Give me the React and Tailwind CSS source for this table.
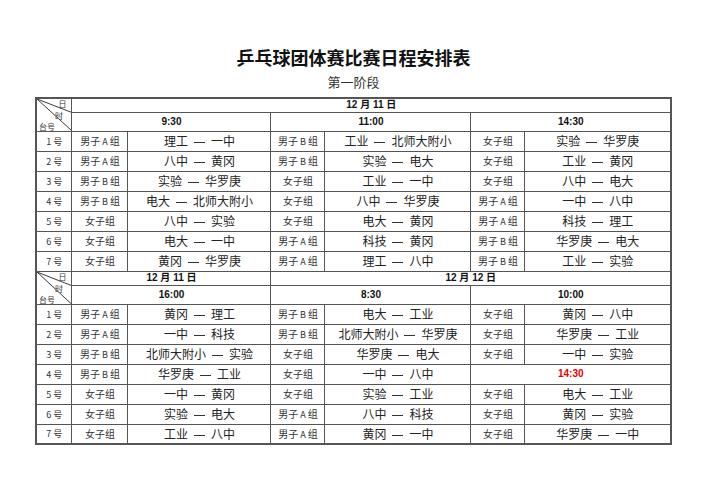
import React from 'react';

const CJK = { fontFamily: '"Noto Sans CJK SC", "Noto Sans", sans-serif' };
const LAT = { fontFamily: '"Liberation Sans", "Noto Sans CJK SC", sans-serif' };

const sections = [
  {
    dates: [{ label: '12 月 11 日', span: 6 }],
    times: ['9:30', '11:00', '14:30'],
    rows: [
      [['男子A组', '理工 — 一中'], ['男子B组', '工业 — 北师大附小'], ['女子组', '实验 — 华罗庚']],
      [['男子A组', '八中 — 黄冈'], ['男子B组', '实验 — 电大'], ['女子组', '工业 — 黄冈']],
      [['男子B组', '实验 — 华罗庚'], ['女子组', '工业 — 一中'], ['女子组', '八中 — 电大']],
      [['男子B组', '电大 — 北师大附小'], ['女子组', '八中 — 华罗庚'], ['男子A组', '一中 — 八中']],
      [['女子组', '八中 — 实验'], ['女子组', '电大 — 黄冈'], ['男子A组', '科技 — 理工']],
      [['女子组', '电大 — 一中'], ['男子A组', '科技 — 黄冈'], ['男子B组', '华罗庚 — 电大']],
      [['女子组', '黄冈 — 华罗庚'], ['男子A组', '理工 — 八中'], ['男子B组', '工业 — 实验']],
    ],
  },
  {
    dates: [
      { label: '12 月 11 日', span: 2 },
      { label: '12 月 12 日', span: 4 },
    ],
    times: ['16:00', '8:30', '10:00'],
    rows: [
      [['男子A组', '黄冈 — 理工'], ['男子B组', '电大 — 工业'], ['女子组', '黄冈 — 八中']],
      [['男子A组', '一中 — 科技'], ['男子B组', '北师大附小 — 华罗庚'], ['女子组', '华罗庚 — 工业']],
      [['男子B组', '北师大附小 — 实验'], ['女子组', '华罗庚 — 电大'], ['女子组', '一中 — 实验']],
      [['男子B组', '华罗庚 — 工业'], ['女子组', '一中 — 八中'], 'red'],
      [['女子组', '一中 — 黄冈'], ['女子组', '实验 — 工业'], ['女子组', '电大 — 工业']],
      [['女子组', '实验 — 电大'], ['男子A组', '八中 — 科技'], ['女子组', '黄冈 — 实验']],
      [['女子组', '工业 — 八中'], ['男子A组', '黄冈 — 一中'], ['女子组', '华罗庚 — 一中']],
    ],
  },
];

function Group({ text }) {
  // spread the latin letter a little, like the printed sheet
  if (text.includes('A') || text.includes('B')) {
    const letter = text.includes('A') ? 'A' : 'B';
    return (
      <>
        男子<span className="mx-[2px] text-[9px]">{letter}</span>组
      </>
    );
  }
  return text;
}

function Match({ text }) {
  const [a, b] = text.split(' — ');
  return (
    <>
      {a}
      <span className="mx-[6px] inline-block w-[11px] border-t-[1.5px] border-[#333] align-middle" />
      {b}
    </>
  );
}

function Corner() {
  return (
    <td rowSpan={2} className="relative border border-[#555] p-0">
      <svg className="absolute inset-0 h-full w-full" viewBox="0 0 36 33" preserveAspectRatio="none">
        <line x1="0" y1="0" x2="36" y2="14" stroke="#333" strokeWidth="1" />
        <line x1="0" y1="0" x2="36" y2="33" stroke="#333" strokeWidth="1" />
      </svg>
      <span className="absolute right-[5px] top-[1px] text-[8px] leading-none text-[#333]" style={CJK}>日</span>
      <span className="absolute left-[18px] top-[13px] text-[8px] leading-none text-[#333]" style={CJK}>时</span>
      <span className="absolute bottom-[0px] left-[2px] text-[8px] leading-none text-[#333]" style={CJK}>台号</span>
    </td>
  );
}

function Section({ data }) {
  return (
    <>
      <tr className="h-[14px]">
        <Corner />
        {data.dates.map((d, i) => (
          <td key={i} colSpan={d.span} className="border border-[#555] p-0 text-center text-[10px] font-bold leading-none text-[#111]" style={LAT}>
            {d.label}
          </td>
        ))}
      </tr>
      <tr className="h-[19px]">
        {data.times.map((t) => (
          <td key={t} colSpan={2} className="border border-[#555] p-0 text-center text-[10px] font-bold leading-none text-[#111]" style={LAT}>
            {t}
          </td>
        ))}
      </tr>
      {data.rows.map((row, r) => (
        <tr key={r} className="h-[20px]">
          <td className="border border-[#555] p-0 text-center text-[9px] leading-none text-[#333]" style={CJK}>
            {r + 1} 号
          </td>
          {row.map((cell, c) =>
            cell === 'red' ? (
              <td key={c} colSpan={2} className="border border-[#555] p-0 text-center text-[10px] font-bold leading-none text-[#e60000]" style={LAT}>
                14:30
              </td>
            ) : (
              <React.Fragment key={c}>
                <td className="whitespace-nowrap border border-[#555] p-0 text-center text-[10px] leading-none text-[#333]" style={CJK}>
                  <Group text={cell[0]} />
                </td>
                <td className="whitespace-nowrap border border-[#555] p-0 text-center text-[12px] leading-none text-[#222]" style={CJK}>
                  <Match text={cell[1]} />
                </td>
              </React.Fragment>
            )
          )}
        </tr>
      ))}
    </>
  );
}

export default function App() {
  return (
    <div className="flex h-[500px] w-[707px] flex-col items-center bg-white pt-[46px]" style={CJK}>
      <h1 className="text-[18px] font-bold leading-[22px] text-[#111]">乒乓球团体赛比赛日程安排表</h1>
      <div className="mt-[5px] text-[13px] leading-[18px] text-[#333]">第一阶段</div>
      <table className="mt-[6px] w-[635px] table-fixed border-collapse border-2 border-[#555]">
        <colgroup>
          <col className="w-[36px]" />
          <col className="w-[56px]" />
          <col className="w-[143px]" />
          <col className="w-[54px]" />
          <col className="w-[146px]" />
          <col className="w-[54px]" />
          <col className="w-[146px]" />
        </colgroup>
        <tbody>
          {sections.map((s, i) => (
            <Section key={i} data={s} />
          ))}
        </tbody>
      </table>
    </div>
  );
}
